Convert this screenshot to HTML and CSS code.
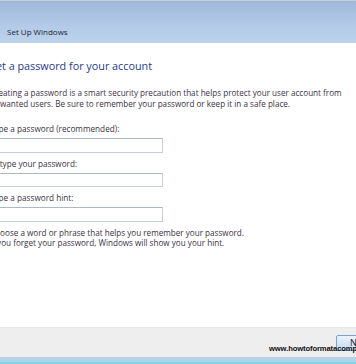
FILE: index.html
```html
<!DOCTYPE html>
<html>
<head>
<meta charset="utf-8">
<link rel="stylesheet" href="styles.css">
</head>
<body>
<div class="page">
  <div class="titlebar"><span class="title">Set Up Windows</span></div>
  <div class="content">
    <div class="inner">
      <h1 class="heading">Set a password for your account</h1>
      <p class="intro">Creating a password is a smart security precaution that helps protect your user account from<br>unwanted users. Be sure to remember your password or keep it in a safe place.</p>
      <div class="field">
        <label class="label">Type a password (recommended):</label>
        <div class="input"></div>
      </div>
      <div class="field">
        <label class="label">Retype your password:</label>
        <div class="input"></div>
      </div>
      <div class="field">
        <label class="label">Type a password hint:</label>
        <div class="input"></div>
      </div>
      <p class="hint">Choose a word or phrase that helps you remember your password.<br>If you forget your password, Windows will show you your hint.</p>
    </div>
  </div>
  <div class="footer">
    <div class="button">Next</div>
    <span class="watermark">www.howtoformatacomputer.net</span>
  </div>
  <div class="stripe"></div>
  <div class="edge"></div>
</div>
</body>
</html>
```
FILE: styles.css
```css
html, body {
  margin: 0;
  padding: 0;
  background: #fff;
}
.page {
  width: 356px;
  height: 364px;
  overflow: hidden;
  display: flex;
  flex-direction: column;
  font-family: "Open Sans", "Noto Sans", sans-serif;
  position: relative;
}
.titlebar {
  height: 43px;
  flex: none;
  box-sizing: border-box;
  border-top: 1px solid #c3cfdc;
  background: linear-gradient(#9fb8d9, #b3cbe8 60%, #bcd2ec);
  display: flex;
  align-items: flex-end;
  padding: 0 0 6px 7px;
}
.title {
  font-size: 8px;
  color: #1c2430;
}
.content {
  flex: 1;
  background: #fff;
  overflow: hidden;
}
.inner {
  margin-left: -10px;
  width: 400px;
}
.heading {
  margin: 14px 0 0 0;
  font-size: 10.8px;
  font-weight: normal;
  color: #1f3a8c;
  line-height: 17px;
}
.intro, .hint {
  margin: 0;
  font-size: 8.15px;
  line-height: 10.5px;
  color: #3a3340;
  white-space: nowrap;
}
.intro {
  margin-top: 14px;
}
.field {
  display: flex;
  flex-direction: column;
  margin-top: 14px;
}
.field + .field {
  margin-top: 5px;
}
.label {
  font-size: 8.2px;
  line-height: 11px;
  color: #3a3340;
}
.input {
  margin-top: 4px;
  width: 173px;
  height: 14.5px;
  box-sizing: border-box;
  border: 1px solid #c4d0de;
  border-top-color: #aab8c8;
  background: #fff;
}
.hint {
  margin-top: 6px;
  line-height: 10px;
}
.footer {
  flex: none;
  height: 30px;
  background: #eeeeee;
  border-top: 1px solid #e6e6e6;
  box-sizing: border-box;
  display: flex;
  justify-content: flex-end;
  align-items: flex-start;
  position: relative;
}
.button {
  margin-top: 7px;
  margin-right: -40px;
  width: 60px;
  height: 16px;
  box-sizing: border-box;
  border: 1px solid #7da2ce;
  border-radius: 2px;
  background: linear-gradient(#e9f3fd, #c4dcf3);
  font-size: 9px;
  line-height: 14px;
  padding-left: 13px;
  color: #1a1a1a;
}
.watermark {
  position: absolute;
  left: 269px;
  top: 16px;
  font-family: "Liberation Sans", Arial, sans-serif;
  font-weight: bold;
  font-size: 7.6px;
  color: #111;
  white-space: nowrap;
  letter-spacing: -0.1px;
}
.stripe {
  flex: none;
  height: 5px;
  background: #b3d2e8;
}
.edge {
  flex: none;
  height: 2px;
  background: #7fd3ea;
}
```
